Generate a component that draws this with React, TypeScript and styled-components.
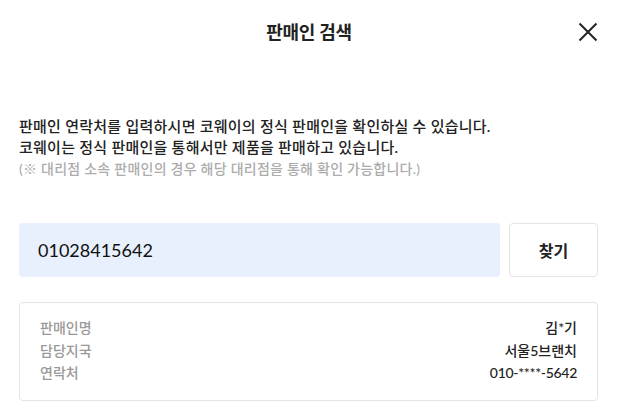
import React from "react";
import styled, { createGlobalStyle } from "styled-components";

const GlobalStyle = createGlobalStyle`
  html, body { margin: 0; padding: 0; background: #fff; }
  body { font-family: Lato, "Noto Sans CJK KR", sans-serif; color: #222; }
  * { box-sizing: border-box; }
`;

const Modal = styled.div`
  width: 618px;
  padding: 0 20px 0 19px;
  display: flex;
  flex-direction: column;
`;

const Header = styled.header`
  height: 64px;
  display: grid;
  grid-template-columns: 1fr auto 1fr;
  align-items: center;
  margin: 0 -20px 0 -19px;
  padding: 0 19px 0 19px;
`;

const Title = styled.h1`
  grid-column: 2;
  margin: 0;
  font-size: 18px;
  font-weight: 700;
  color: #222;
  letter-spacing: -0.3px;
  line-height: 1;
`;

const CloseButton = styled.button`
  grid-column: 3;
  justify-self: end;
  width: 22px;
  height: 22px;
  padding: 0;
  border: none;
  background: none;
  display: flex;
  align-items: center;
  justify-content: center;
  cursor: pointer;
`;

const Description = styled.div`
  margin-top: 52px;
  line-height: 21px;
  font-weight: 500;
  letter-spacing: 0.25px;
`;

const Line = styled.p<{ $muted?: boolean }>`
  margin: 0;
  font-size: ${(p) => (p.$muted ? "14px" : "15px")};
  color: ${(p) => (p.$muted ? "#acacac" : "#222")};
`;

const SearchRow = styled.div`
  margin-top: 44px;
  display: flex;
  gap: 9px;
  height: 54px;
`;

const Input = styled.input`
  flex: 1;
  height: 100%;
  border: none;
  border-radius: 4px;
  background: #e8f0fe;
  padding: 0 19px;
  font-family: Lato, "Noto Sans CJK KR", sans-serif;
  font-size: 18px;
  color: #111;
  outline: none;
`;

const SearchButton = styled.button`
  width: 89px;
  height: 100%;
  border: 1px solid #e4e4e4;
  border-radius: 4px;
  background: #fff;
  font-family: Lato, "Noto Sans CJK KR", sans-serif;
  font-size: 16px;
  font-weight: 700;
  color: #222;
  cursor: pointer;
`;

const ResultBox = styled.dl`
  margin: 25px 0 0;
  border: 1px solid #e4e4e4;
  border-radius: 4px;
  padding: 14px 20px 15px;
  display: grid;
  grid-template-columns: 1fr auto;
`;

const Label = styled.dt`
  font-size: 14px;
  line-height: 22.5px;
  color: #999;
  font-weight: 500;
`;

const Value = styled.dd<{ $tight?: boolean }>`
  margin: 0;
  font-size: 14px;
  line-height: 22.5px;
  color: #222;
  text-align: right;
  font-weight: 500;
  letter-spacing: ${(p) => (p.$tight ? "-0.3px" : "0")};
`;

const rows: [string, string, boolean][] = [
  ["판매인명", "김*기", false],
  ["담당지국", "서울5브랜치", false],
  ["연락처", "010-****-5642", true],
];

export default function App() {
  return (
    <>
      <GlobalStyle />
      <Modal>
        <Header>
          <Title>판매인 검색</Title>
          <CloseButton aria-label="닫기">
            <svg width="20" height="20" viewBox="0 0 20 20">
              <path d="M1.5 1.5 L18.5 18.5 M18.5 1.5 L1.5 18.5" stroke="#222" strokeWidth="2" fill="none" />
            </svg>
          </CloseButton>
        </Header>
        <Description>
          <Line>판매인 연락처를 입력하시면 코웨이의 정식 판매인을 확인하실 수 있습니다.</Line>
          <Line>코웨이는 정식 판매인을 통해서만 제품을 판매하고 있습니다.</Line>
          <Line $muted>(※ 대리점 소속 판매인의 경우 해당 대리점을 통해 확인 가능합니다.)</Line>
        </Description>
        <SearchRow>
          <Input defaultValue="01028415642" />
          <SearchButton>찾기</SearchButton>
        </SearchRow>
        <ResultBox>
          {rows.map(([k, v, tight]) => (
            <React.Fragment key={k}>
              <Label>{k}</Label>
              <Value $tight={tight}>{v}</Value>
            </React.Fragment>
          ))}
        </ResultBox>
      </Modal>
    </>
  );
}
